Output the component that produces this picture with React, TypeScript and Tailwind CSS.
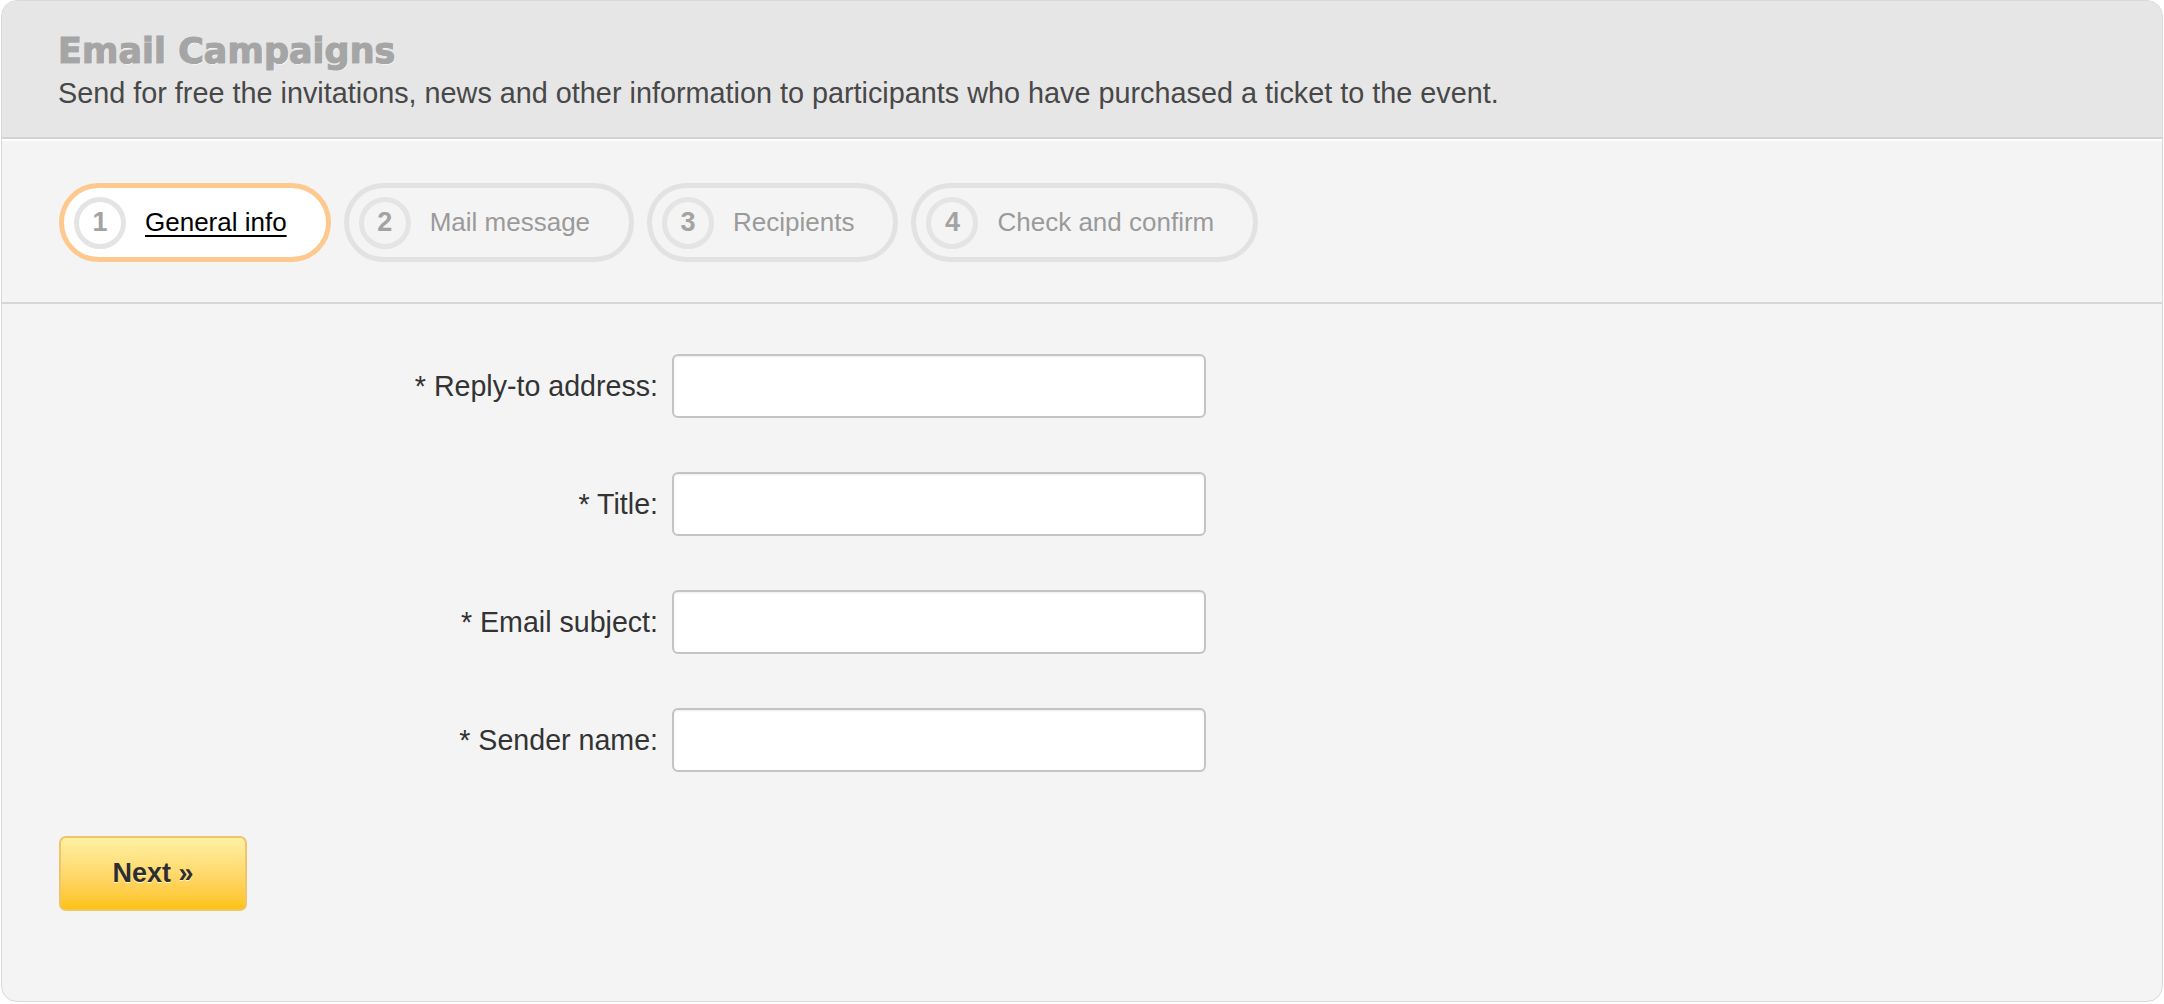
import React from "react";

const steps = [
  { n: "1", label: "General info", active: true },
  { n: "2", label: "Mail message", active: false },
  { n: "3", label: "Recipients", active: false },
  { n: "4", label: "Check and confirm", active: false },
];

const fields = ["* Reply-to address:", "* Title:", "* Email subject:", "* Sender name:"];

export default function App() {
  return (
    <div className="w-[2164px] h-[1004px] bg-white font-['Liberation_Sans',Arial,sans-serif]">
      <div className="ml-[1px] w-[2162px] h-[1002px] rounded-[16px] border border-[#d9d9d9] bg-[#f4f4f4] overflow-hidden flex flex-col">
        {/* Header */}
        <div className="h-[138px] shrink-0 bg-[#e6e6e6] border-b-2 border-[#d2d2d2] pl-[56px] pt-[33px]">
          <h1 className="font-['DejaVu_Sans',sans-serif] font-bold text-[35px] leading-[35px] text-[#a5a5a5] [-webkit-text-stroke:1.2px_#a5a5a5] [text-shadow:1px_1px_0_#ffffff]">
            Email Campaigns
          </h1>
          <p className="mt-[10px] text-[28.8px] leading-[28px] text-[#484848]">
            Send for free the invitations, news and other information to participants who have purchased a ticket to the event.
          </p>
        </div>

        {/* Steps */}
        <div className="shrink-0 border-t-2 border-white border-b-2 border-b-[#d6d6d6] pl-[57px] pt-[42px] pb-[40px] flex gap-[13px]">
          {steps.map((s) => (
            <div
              key={s.n}
              className={
                s.active
                  ? "h-[79px] rounded-full border-[5px] border-[#fdc98f] bg-white flex items-center pl-[10px] pr-[39px]"
                  : "h-[79px] rounded-full border-[5px] border-[#e2e2e2] flex items-center pl-[10px] pr-[39px]"
              }
            >
              <div className="w-[52px] h-[52px] rounded-full border-[5px] border-[#e4e4e4] flex items-center justify-center text-[27px] font-bold text-[#a3a3a3]">
                {s.n}
              </div>
              <span
                className={
                  s.active
                    ? "ml-[19px] text-[26px] text-black underline underline-offset-[4px] decoration-[2px]"
                    : "ml-[19px] text-[26px] text-[#9a9a9a]"
                }
              >
                {s.label}
              </span>
            </div>
          ))}
        </div>

        {/* Form */}
        <div className="pl-[57px] pt-[50px] flex flex-col">
          <div className="flex flex-col gap-[54px]">
            {fields.map((f) => (
              <div key={f} className="flex items-center">
                <label className="w-[599px] text-right text-[28.6px] text-[#333333]">{f}</label>
                <input
                  type="text"
                  className="ml-[14px] w-[534px] h-[64px] bg-white border-2 border-[#c4c4c4] rounded-[6px] shadow-[inset_0_1px_2px_rgba(0,0,0,0.08)] outline-none"
                />
              </div>
            ))}
          </div>
          <button className="mt-[64px] w-[188px] h-[75px] rounded-[7px] border-2 border-[#f0c46a] bg-gradient-to-b from-[#fff0a3] to-[#ffc200] text-[27px] font-bold text-[#2e2e2e] [text-shadow:0_1px_0_#fff6c8]">
            Next »
          </button>
        </div>
      </div>
    </div>
  );
}
